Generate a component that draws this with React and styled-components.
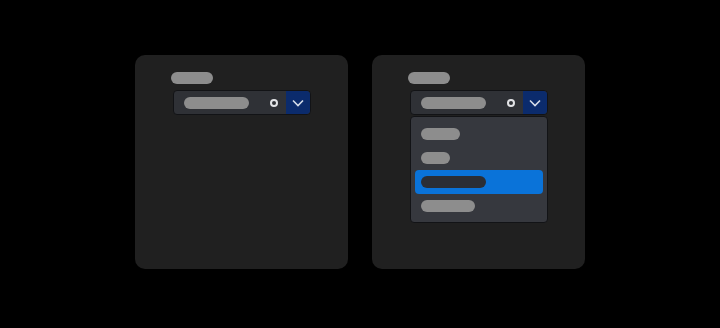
import React from "react";
import styled, { createGlobalStyle } from "styled-components";

const GlobalStyle = createGlobalStyle`
  html, body {
    margin: 0;
    background: #000;
    font-family: "Inter", "Liberation Sans", sans-serif;
  }
`;

const Page = styled.div`
  height: 328px;
  display: flex;
  align-items: center;
  justify-content: center;
  gap: 24px;
  padding-bottom: 4px;
  box-sizing: border-box;
`;

const Card = styled.div`
  width: 213px;
  height: 214px;
  box-sizing: border-box;
  background: #202020;
  border-radius: 10px;
  padding: 17px 0 0 36px;
  display: flex;
  flex-direction: column;
  align-items: flex-start;
`;

const Bar = styled.span`
  display: block;
  width: ${(p) => p.w}px;
  height: 12px;
  border-radius: 6px;
  background: ${(p) => (p.dark ? "#2b2e35" : "#8d8d8d")};
`;

const Field = styled.div`
  margin: 6px 0 0 2px;
  display: flex;
  flex-direction: column;
`;

const Select = styled.div`
  width: 138px;
  height: 25px;
  box-sizing: border-box;
  border: 1px solid #121316;
  border-radius: 4px;
  background: #2f3136;
  display: flex;
  align-items: center;
  padding-left: 10px;
  overflow: hidden;
`;

const Value = styled.div`
  flex: 1;
  display: flex;
  align-items: center;
`;

const Clear = styled.span`
  width: 4px;
  height: 4px;
  border: 2px solid #e2e3e6;
  border-radius: 50%;
  margin-right: 8px;
`;

const Toggle = styled.div`
  width: 24px;
  align-self: stretch;
  background: #0b2b6c;
  display: flex;
  align-items: center;
  justify-content: center;
  border-radius: 0 3px 3px 0;
`;

const Menu = styled.div`
  width: 138px;
  box-sizing: border-box;
  margin-top: 1px;
  border: 1px solid #121316;
  border-radius: 4px;
  background: #36383e;
  padding: 5px 4px 4px;
  display: flex;
  flex-direction: column;
`;

const Option = styled.div`
  height: 24px;
  display: flex;
  align-items: center;
  padding-left: 6px;
  border-radius: 4px;
  background: ${(p) => (p.active ? "#0a73d9" : "transparent")};
`;

const Chevron = () => (
  <svg width="12" height="8" viewBox="0 0 12 8">
    <path d="M1 1.5 L6 6.5 L11 1.5" fill="none" stroke="#d4dbe8" strokeWidth="1.6" />
  </svg>
);

const SelectBox = () => (
  <Select>
    <Value>
      <Bar w={65} />
    </Value>
    <Clear />
    <Toggle>
      <Chevron />
    </Toggle>
  </Select>
);

const options = [39, 29, 65, 54];

export default function App() {
  return (
    <>
      <GlobalStyle />
      <Page>
        <Card>
          <Bar w={42} />
          <Field>
            <SelectBox />
          </Field>
        </Card>
        <Card>
          <Bar w={42} />
          <Field>
            <SelectBox />
            <Menu>
              {options.map((w, i) => (
                <Option key={i} active={i === 2}>
                  <Bar w={w} dark={i === 2} />
                </Option>
              ))}
            </Menu>
          </Field>
        </Card>
      </Page>
    </>
  );
}
